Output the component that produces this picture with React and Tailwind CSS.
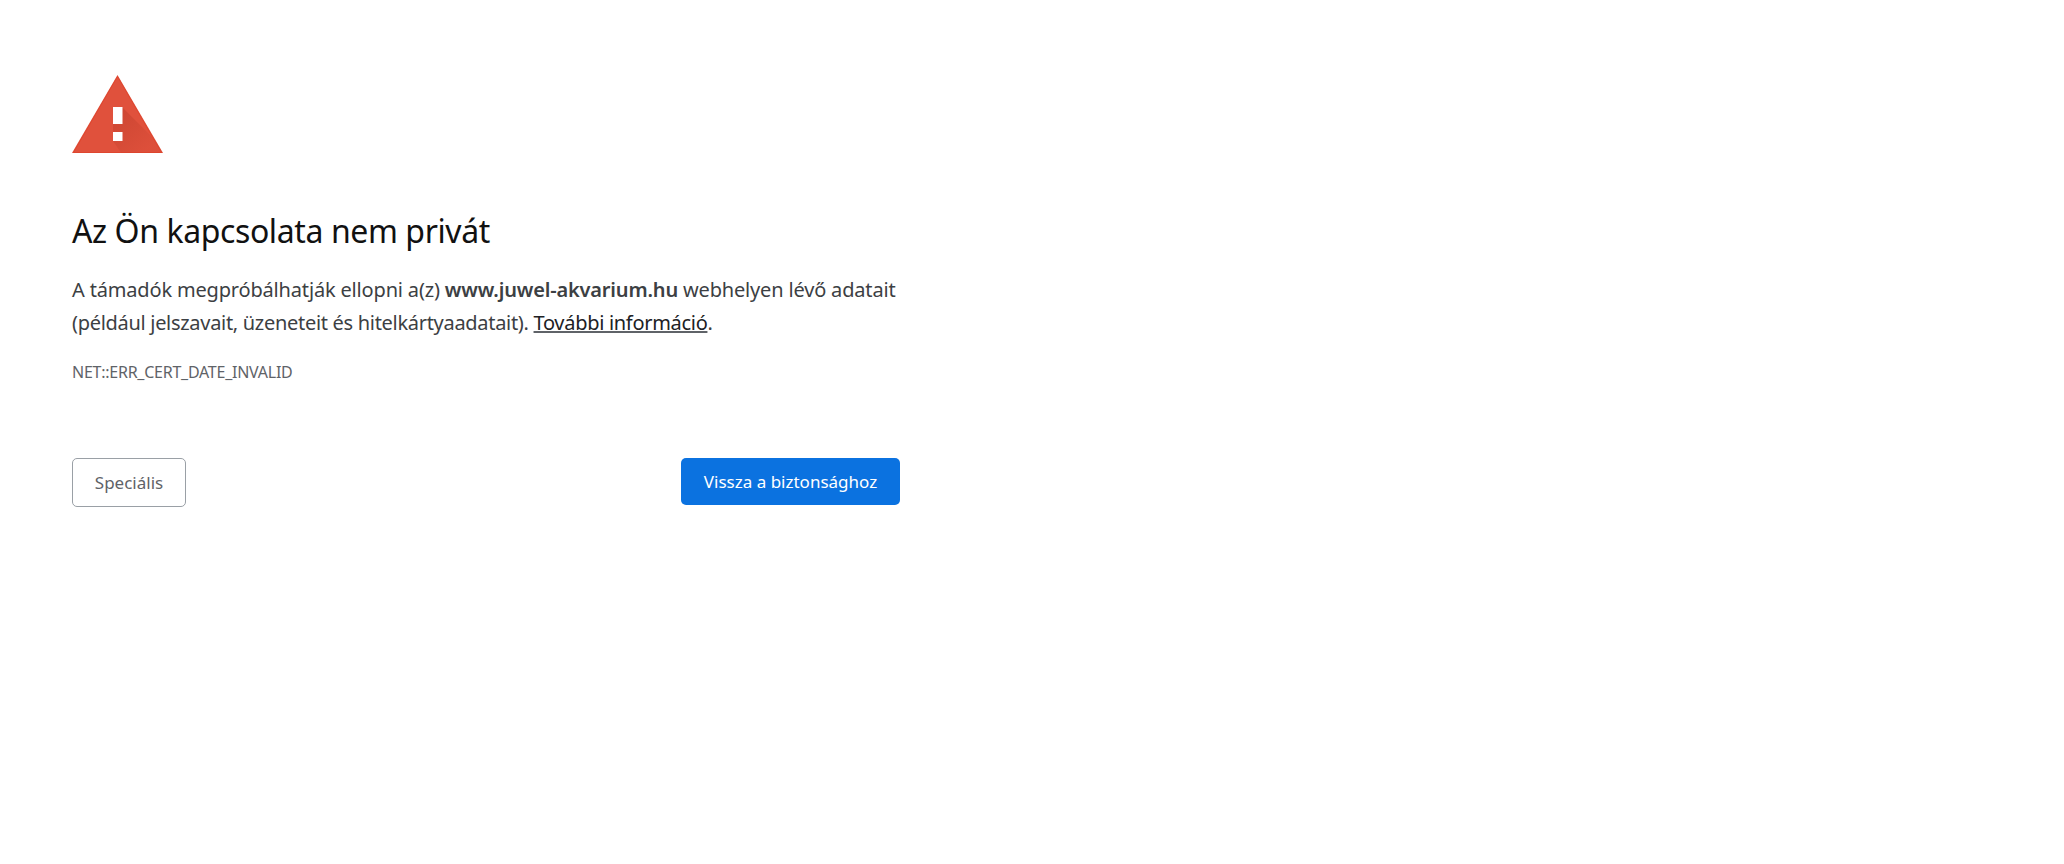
export default function App() {
  return (
    <div className="min-h-[864px] bg-white font-['Noto_Sans',sans-serif]">
      <div className="w-[828px] pl-[72px] pt-[75px]">
        <svg width="91" height="78" viewBox="0 0 91 78" className="block">
          <defs>
            <linearGradient id="shade" x1="0.1" y1="0.1" x2="0.7" y2="0.7">
              <stop offset="0" stopColor="#b83a28" stopOpacity="0.45" />
              <stop offset="1" stopColor="#b83a28" stopOpacity="0.08" />
            </linearGradient>
            <clipPath id="tri"><polygon points="45.5,0 91,78 0,78" /></clipPath>
          </defs>
          <polygon points="45.5,0 91,78 0,78" fill="#e0513c" />
          <polygon points="50,32 100,82 52,82 41,66 41,49" fill="url(#shade)" clipPath="url(#tri)" />
          <polygon points="45.5,1.5 89.5,77.5 1.5,77.5" fill="none" stroke="#dd4027" strokeWidth="1" opacity="0.6" />
          <rect x="41" y="32" width="9.5" height="17" fill="#fff" />
          <rect x="41" y="57" width="9.5" height="9" fill="#fff" />
        </svg>
        <h1 className="mt-[58px] whitespace-nowrap text-[32px] leading-[40px] font-normal text-[#111] tracking-[-0.4px]">Az Ön kapcsolata nem privát</h1>
        <p className="mt-[22px] whitespace-nowrap text-[20px] leading-[33px] text-[#3c4043] tracking-[-0.3px]">
          <span className="tracking-[-0.17px]">A támadók megpróbálhatják ellopni a(z) <strong className="font-semibold">www.juwel-akvarium.hu</strong> webhelyen lévő adatait</span>
          <br />
          (például jelszavait, üzeneteit és hitelkártyaadatait). <a className="underline decoration-[#5f6368] text-[#202124]">További információ</a>.
        </p>
        <div className="mt-[23px] whitespace-nowrap text-[16px] leading-[20px] text-[#5f6368] tracking-[-0.25px]">NET::ERR_CERT_DATE_INVALID</div>
        <div className="mt-[76px] flex w-[828px] items-start justify-between">
          <button className="flex h-[49px] w-[114px] items-center justify-center rounded-[5px] border border-[#9aa0a6] bg-white text-[17px] text-[#5f6368]">Speciális</button>
          <button className="flex h-[47px] w-[219px] items-center justify-center rounded-[5px] bg-[#0b72e0] text-[17px] text-white">Vissza a biztonsághoz</button>
        </div>
      </div>
    </div>
  );
}
